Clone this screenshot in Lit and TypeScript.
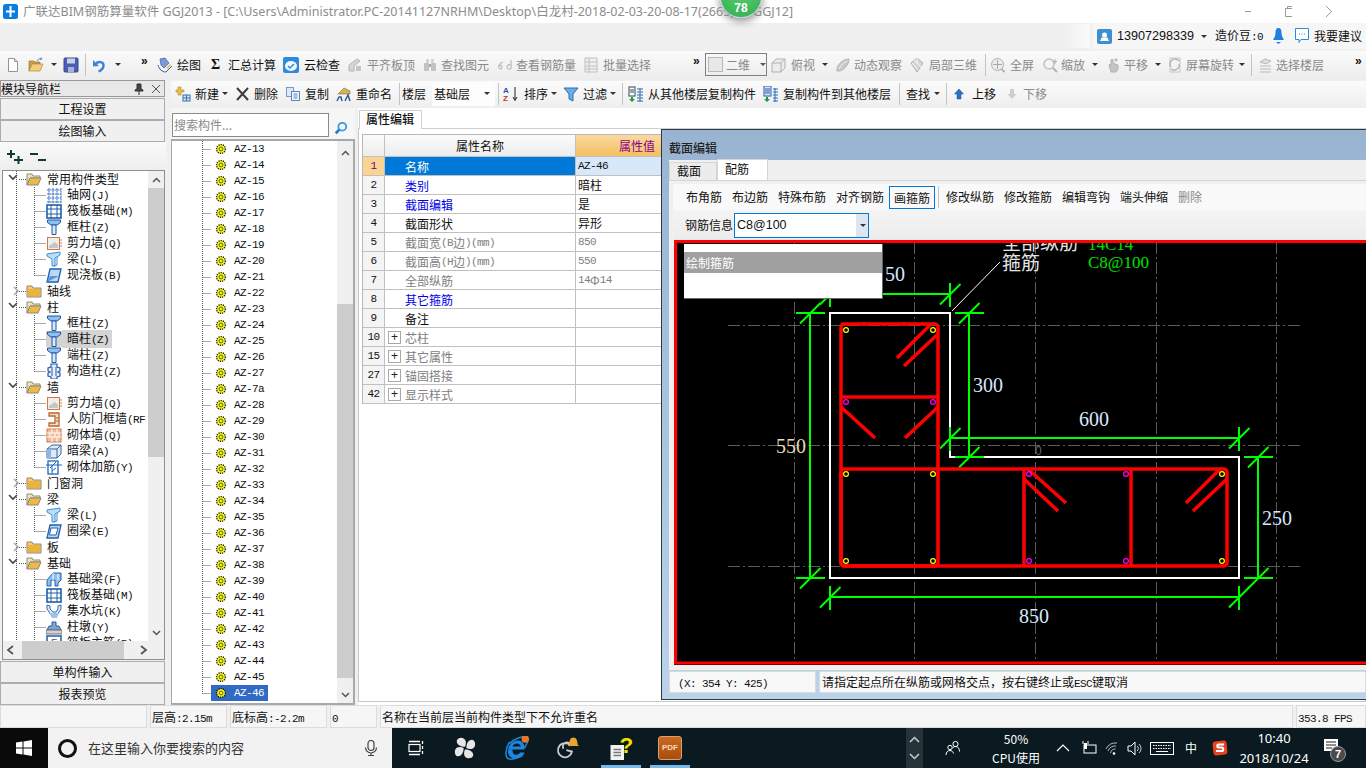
import { LitElement, html, svg, css, TemplateResult } from 'lit';
import { customElement } from 'lit/decorators.js';

// latin runs are narrower in the original bitmap font, so they get their own span
const m = (text: string) =>
  text.split(/([\x21-\x7e][\x20-\x7e]*)/).map((part, i) => (i % 2 ? html`<span class="m">${part}</span>` : part));

const ICONS: Record<string, TemplateResult> = {
  new: svg`<path d="M3.5 1.5h6l3 3v10h-9z" fill="#fff" stroke="#8b97a5"/><path d="M9.5 1.5v3h3" fill="#e3e8ee" stroke="#8b97a5"/>`,
  open: svg`<path d="M1 4h5l1 1h5v2H4l-3 7z" fill="#cfa048" stroke="#9a7a30" stroke-width=".7"/><path d="M4 7h11l-3 7H1z" fill="#f3cf7d" stroke="#a88a40" stroke-width=".7"/><path d="M9 4c1-2 3-3 5-2l-1-1.5M14 2l-2 .5" fill="none" stroke="#5f8cc5"/>`,
  save: svg`<rect x="1" y="1" width="14" height="14" rx="1" fill="#4c5fb4" stroke="#3a468c"/><rect x="4" y="1.5" width="8" height="5" fill="#c9d0ea"/><rect x="5" y="10" width="6" height="5" fill="#aab2cc"/>`,
  undo: svg`<path d="M2 3v6.5L8 9z" fill="#3a86d4"/><path d="M4 7.500C7 3.500 13 4.500 12.500 9 12.200 11.500 10 13.500 7.500 14.500" stroke="#3a86d4" stroke-width="2.4" fill="none"/>`,
  draw: svg`<path d="M3 2l5-1 4 5-5 5-3-3z" fill="#7d9ad8" stroke="#3c5da4" stroke-width=".7"/><path d="M1 8c1 4 4 7 8 7l6-6" fill="none" stroke="#3c5da4"/><path d="M9 11l4-4 1 1-3 4z" fill="#e8c050"/>`,
  cloud: svg`<rect x="0" y="0" width="16" height="16" rx="2" fill="#2b8bdc"/><ellipse cx="8" cy="9" rx="6" ry="5" fill="#f4f9fe"/><path d="M5 9l2 2 4-4" stroke="#2b8bdc" stroke-width="1.5" fill="none"/>`,
  align: svg`<path d="M2 14V8l8-6 3 2-6 5v5z" fill="#d5d5d5" stroke="#b5b5b5"/><rect x="9" y="9" width="5" height="5" fill="#c5c5c5"/>`,
  binoc: svg`<rect x="2" y="6" width="5" height="8" rx="1" fill="#c2c2c2"/><rect x="9" y="6" width="5" height="8" rx="1" fill="#c2c2c2"/><rect x="4" y="2" width="3" height="4" fill="#d5d5d5"/><rect x="9" y="2" width="3" height="4" fill="#d5d5d5"/><rect x="7" y="7" width="2" height="3" fill="#aaa"/>`,
  rebar: svg`<path d="M6 5C3 6 1 9 2 11c1 1.5 3 1 3-1s-2-2-3-1M14 3v9M14 8c-2-1-4 0-4 2s3 3 4 1" fill="none" stroke="#bbb" stroke-width="1.2"/>`,
  batch: svg`<path d="M2 1h12v14H2zM2 5h12M2 9h12M2 12h12M6 1v14" fill="#efefef" stroke="#c0c0c0"/>`,
  cube: svg`<path d="M2 6l4-4h9v9l-4 4H2z" fill="#ececec" stroke="#b0b0b0"/><path d="M2 6h9v9M11 6l4-4" fill="none" stroke="#b0b0b0"/>`,
  orbit: svg`<path d="M2 14C1 9 7 2 14 2c0 6-6 13-12 12z" fill="#c8c8c8" stroke="#b5b5b5"/><path d="M4 12C6 8 9 5 12 4" stroke="#eee" fill="none"/>`,
  local3d: svg`<path d="M8 1l6 5-6 9-6-9z" fill="#d5d5d5" stroke="#b0b0b0"/><path d="M5 3l7 7M3 6l6 7M8 1v6" stroke="#f5f5f5" fill="none"/>`,
  full: svg`<circle cx="7.5" cy="7.5" r="6" fill="#ececec" stroke="#b0b0b0"/><path d="M7.5 3v9M3 7.5h9" stroke="#a8a8a8"/><path d="M11.5 12l3 3" stroke="#b0b0b0" stroke-width="2"/>`,
  zoom: svg`<circle cx="7" cy="7" r="5" fill="#f4f4f4" stroke="#c0c0c0" stroke-width="1.5"/><path d="M11 11l4 4" stroke="#b0b0b0" stroke-width="2"/><path d="M13 2v5M11 4.5h4" stroke="#b0b0b0"/>`,
  pan: svg`<path d="M4 8l1-1 1 1V3l1-1 1 1v3l2 1 3 1v4l-2 3H6z" fill="#c5c5c5" stroke="#b0b0b0"/><path d="M11 1v4M9 3h4" stroke="#b0b0b0"/>`,
  rotate: svg`<rect x="3" y="1" width="10" height="14" fill="#f2f2f2" stroke="#c5c5c5"/><path d="M12 4a5 5 0 0 0-8 6M4 12a5 5 0 0 0 8-5" fill="none" stroke="#aaa" stroke-width="1.2"/>`,
  floors: svg`<path d="M3 5l5-3 6 2-5 3zM3 9h11M3 12h11M3 15h11" fill="#ddd" stroke="#b8b8b8"/>`,
  newitem: svg`<path d="M3 1h3v3h3v2H6v3H3V6H1V4h2z" fill="#f0c040" stroke="#a88a30" stroke-width=".6"/><rect x="8" y="9" width="7" height="6" fill="#dbe7f5" stroke="#3b6fb5"/><path d="M8 12h7M11.5 9v6" stroke="#3b6fb5"/>`,
  del: svg`<path d="M3 2l11 12M14 2L3 14" stroke="#3c3c3c" stroke-width="2"/>`,
  copy: svg`<rect x="1.5" y="1.5" width="7" height="9" fill="#dfe9f7" stroke="#7a97c0"/><rect x="6.5" y="5.5" width="8" height="9" fill="#f4f8fd" stroke="#5b84bb"/><path d="M8.5 8h4M8.5 10h4M8.5 12h4" stroke="#5b84bb"/>`,
  rename: svg`<path d="M2 8l6-6 6 3v3H5z" fill="#d5b45c" stroke="#7f6a2c" stroke-width=".6"/><path d="M1 15l2-4h2l1 4M9 15l3-6 2 6" fill="none" stroke="#335d99" stroke-width="1.5"/>`,
  sort: svg`<text x="0" y="7" font-size="8" font-weight="700" font-family="Liberation Sans" fill="#2c55a5">A</text><text x="0" y="15" font-size="8" font-weight="700" font-family="Liberation Sans" fill="#b53a2a">Z</text><path d="M12 1v13M10 11l2 3.5 2-3.5" stroke="#222" fill="none"/>`,
  filter: svg`<path d="M1 2h14L10 8v7l-4-2V8z" fill="#69aee4" stroke="#2b6eaf"/>`,
  fromfl: svg`<rect x="1" y="1" width="6" height="9" fill="#fff" stroke="#345"/><path d="M2 4h4M2 6h4" stroke="#345"/><path d="M3 11h2v2h2l-3 3-3-3h2z" fill="#1e9a3c"/><path d="M9 3h6M9 6h6M9 9h6M9 12h6M9 15h6M12 2v14" stroke="#2f6fb5"/>`,
  tofl: svg`<rect x="1" y="0" width="7" height="10" fill="#dbe8fb" stroke="#2c55a5"/><path d="M2 3h5M2 5h5M2 7h5" stroke="#2c55a5"/><path d="M3 11h2v2h2l-3 3-3-3h2z" fill="#1e9a3c"/><path d="M10 3h5M10 6h5M10 9h5M10 12h5M10 15h5M12 2v14" stroke="#2f6fb5"/>`,
  up: svg`<path d="M8 3l4.5 5H10v5H6V8H3.5z" fill="#2a70c8" stroke="#1b4f96" stroke-width=".5"/>`,
  down: svg`<path d="M8 13l4.5-5H10V3H6v5H3.5z" fill="#cdcdcd"/>`,
  search: svg`<circle cx="9.5" cy="6.5" r="4.5" fill="none" stroke="#3a97dd" stroke-width="2"/><path d="M6 10l-4 4" stroke="#1f7fce" stroke-width="3"/>`,
  folder: svg`<path d="M1 3h5l1 2h8v9H1z" fill="#f2cc6b" stroke="#8f8a7a"/><rect x="2" y="6" width="12" height="7" fill="#e9b33e"/>`,
  folderOpen: svg`<path d="M1 3h5l1 2h7v2H4l-3 7z" fill="#efe3bb" stroke="#8f8a7a"/><path d="M4 7h11l-3 7H1z" fill="#eeb84a" stroke="#8f8a7a"/>`,
  grid: svg`<path d="M1 3h14M1 7h14M1 11h14M1 15h14M3 1v15M7 1v15M11 1v15M15 1v15" stroke="#3b6fc5" stroke-dasharray="2 .6"/>`,
  raft: svg`<rect x="1" y="2" width="14" height="13" fill="#fff" stroke="#1f5fa8" stroke-width="1.6"/><path d="M1 6h14M1 11h14M5 2v13M11 2v13" stroke="#1f5fa8"/>`,
  col: svg`<path d="M1.5 1h13v2.5L11 6H5L1.5 3.5z" fill="#8fc0ee" stroke="#1e55a5"/><path d="M6 6h4v9.5H6z" fill="#d7e9fb" stroke="#1e55a5"/>`,
  wall: svg`<rect x="1.5" y="2.5" width="12" height="12" fill="#f0eeea" stroke="#d0784a"/><path d="M3 13h9v-3l-3-3-2 1-4 3z" fill="#c5c5c5"/><path d="M14 5h2M14 8h2M14 11h2" stroke="#d0784a"/>`,
  beam: svg`<path d="M1 3l13-2v3l-5 3v8H6V8L1 5z" fill="#bddcf6" stroke="#3c8fd6"/><path d="M11 6v8l-3 1" fill="none" stroke="#3c8fd6"/>`,
  slab: svg`<path d="M4 2h11l-3 13H1z" fill="#bcd8f5" stroke="#1f5fb0" stroke-width="1.3"/><path d="M1 15l3-6h9" fill="#5d94d8"/>`,
  cons: svg`<path d="M5 1h6v3l3 1v3l-2 1 2 1v3l-3 1v2H5v-2l-3-1v-3l2-1-2-1V5l3-1z" fill="#e8eef8" stroke="#245ca8" stroke-width="1.2"/><path d="M6 4v9M10 4v9" stroke="#245ca8"/>`,
  rf: svg`<path d="M3 2h10v13H3V12h6V5H3z" fill="#f2ddca" stroke="#b9652a" stroke-width="1.3"/><path d="M10 7h3M10 10h3" stroke="#b9652a"/>`,
  brick: svg`<rect x="1" y="2" width="14" height="13" fill="#f3bd9a" stroke="#cc7c4c"/><path d="M1 6h14M1 10h14M6 2v4M11 2v4M4 6v4M9 6v4M13 6v4M6 10v5M11 10v5" stroke="#fff"/>`,
  hbeam: svg`<path d="M1 6l5-4h9v9l-4 4H1z" fill="#dfeaf6" stroke="#34659f"/><path d="M1 6h10v9M11 6l4-4" fill="none" stroke="#34659f"/><rect x="1" y="6" width="4" height="9" fill="#8fb6df"/>`,
  jj: svg`<rect x="2" y="2" width="10" height="13" fill="#fff" stroke="#1f68c0" stroke-width="1.3"/><path d="M0 6h16M4 9l6-6M6 15V6M10 9l-4 3" stroke="#1f68c0"/>`,
  ring: svg`<path d="M4 2h11l-3 13H1z" fill="#bcd8f5" stroke="#1f5fb0" stroke-width="1.3"/><path d="M5 5h7l-2 7H3.5z" fill="#fff" stroke="#1f5fb0"/>`,
  fbeam: svg`<path d="M1 15V9l6-7h8v7l-3 3v3H9V9H5v6z" fill="#8fbdee" stroke="#235fae"/><path d="M7 9V2M12 9V3" stroke="#fff"/>`,
  pit: svg`<path d="M1 2l3 1v3l3 3h3l2-3V3l3-1v4l-4 6H5L1 6z" fill="#dfeaf6" stroke="#2f6cb8"/><path d="M3 10h10l-2 5H6z" fill="#9ac4ec"/>`,
  pier: svg`<path d="M6 7V3h4v4h3l2 4H1l2-4z" fill="#7da6d6" stroke="#345e94"/><rect x="0" y="11" width="16" height="4" fill="#d0d0d0" stroke="#777"/>`,
  rebars: svg`<rect x="1" y="1" width="14" height="14" fill="#fff" stroke="#1f5fa8" stroke-width="1.5"/><text x="5" y="12" font-size="10" font-family="Liberation Sans" fill="#1f5fa8">F</text>`,
  az: svg`<circle cx="8" cy="8" r="5" fill="#ffff00" stroke="#111" stroke-width="1.5" stroke-dasharray="1.4 1.1"/><circle cx="8" cy="8" r="2.2" fill="none" stroke="#444"/>`,
};

const ic = (name: string, size = 16) =>
  html`<svg class="ic" width=${size} height=${size} viewBox="0 0 16 16">${ICONS[name]}</svg>`;

const caret = html`<span class="caret"></span>`;

interface Cell {
  x: number;
  i?: string;
  t?: string;
  gray?: boolean;
  dd?: boolean;
  sep?: boolean;
  more?: boolean;
  c?: TemplateResult;
}

// toolbars are given as start positions, each cell is as wide as the gap to the next one
const strip = (cells: Cell[], start: number, end: number) =>
  html`<div class="strip" style="padding-left:${cells[0].x - start}px">
    ${cells.map((c, n) => {
      const w = (n + 1 < cells.length ? cells[n + 1].x : end) - c.x;
      return html`<div class="cell ${c.gray ? 'gray' : ''}" style="width:${w}px">
        ${c.i ? ic(c.i) : ''}${c.t ? m(c.t) : ''}${c.dd ? caret : ''}${c.sep ? html`<span class="sep"></span>` : ''}${c.more
          ? html`<span class="more">»</span>`
          : ''}${c.c ?? ''}
      </div>`;
    })}
  </div>`;

const TOOLS_1: Cell[] = [
  { x: 5, i: 'new' }, { x: 28, i: 'open' }, { x: 50, dd: true }, { x: 63, i: 'save' }, { x: 85, sep: true },
  { x: 91, i: 'undo' }, { x: 114, dd: true }, { x: 138, more: true }, { x: 157, i: 'draw' }, { x: 177, t: '绘图' },
  { x: 210, c: html`<b class="sigma">Σ</b>` }, { x: 228, t: '汇总计算' }, { x: 283, i: 'cloud' }, { x: 304, t: '云检查' },
  { x: 347, i: 'align', gray: true }, { x: 367, t: '平齐板顶', gray: true }, { x: 422, i: 'binoc' },
  { x: 441, t: '查找图元', gray: true }, { x: 497, i: 'rebar' }, { x: 516, t: '查看钢筋量', gray: true },
  { x: 583, i: 'batch' }, { x: 603, t: '批量选择', gray: true }, { x: 690, more: true },
  { x: 705, c: html`<div class="combo2d"><span class="sq"></span><span>二维</span>${caret}</div>` },
  { x: 770, i: 'cube' }, { x: 791, t: '俯视', gray: true }, { x: 821, dd: true }, { x: 835, i: 'orbit' },
  { x: 854, t: '动态观察', gray: true }, { x: 909, i: 'local3d' }, { x: 929, t: '局部三维', gray: true },
  { x: 985, sep: true }, { x: 990, i: 'full' }, { x: 1010, t: '全屏', gray: true }, { x: 1042, i: 'zoom' },
  { x: 1061, t: '缩放', gray: true }, { x: 1091, dd: true }, { x: 1105, i: 'pan' }, { x: 1124, t: '平移', gray: true },
  { x: 1154, dd: true }, { x: 1167, i: 'rotate' }, { x: 1186, t: '屏幕旋转', gray: true }, { x: 1238, dd: true },
  { x: 1251, sep: true }, { x: 1257, i: 'floors' }, { x: 1276, t: '选择楼层', gray: true }, { x: 1352, more: true },
];

const TOOLS_2: Cell[] = [
  { x: 175, i: 'newitem' }, { x: 195, t: '新建' }, { x: 221, dd: true }, { x: 234, i: 'del' }, { x: 254, t: '删除' },
  { x: 285, i: 'copy' }, { x: 305, t: '复制' }, { x: 336, i: 'rename' }, { x: 356, t: '重命名' }, { x: 399, sep: true },
  { x: 402, t: '楼层' }, { x: 432, c: html`<div class="floor"><span>基础层</span>${caret}</div>` }, { x: 498, sep: true },
  { x: 503, i: 'sort' }, { x: 524, t: '排序' }, { x: 550, dd: true }, { x: 563, i: 'filter' }, { x: 583, t: '过滤' },
  { x: 609, dd: true }, { x: 622, sep: true }, { x: 628, i: 'fromfl' }, { x: 648, t: '从其他楼层复制构件' },
  { x: 763, i: 'tofl' }, { x: 783, t: '复制构件到其他楼层' }, { x: 899, sep: true }, { x: 906, t: '查找' },
  { x: 933, dd: true }, { x: 946, sep: true }, { x: 951, i: 'up' }, { x: 972, t: '上移' }, { x: 1004, i: 'down' },
  { x: 1023, t: '下移', gray: true },
];

const REBAR_TOOLS: Cell[] = [
  { x: 686, t: '布角筋' }, { x: 732, t: '布边筋' }, { x: 778, t: '特殊布筋' }, { x: 836, t: '对齐钢筋' },
  { x: 889, c: html`<div class="pressed">画箍筋</div>` }, { x: 938, sep: true }, { x: 946, t: '修改纵筋' },
  { x: 1004, t: '修改箍筋' }, { x: 1062, t: '编辑弯钩' }, { x: 1120, t: '端头伸缩' }, { x: 1178, t: '删除', gray: true },
];

type Node = [level: 0 | 1, icon: string, label: string, last?: boolean, collapsed?: boolean];
const NAV: Node[] = [
  [0, 'folderOpen', '常用构件类型'], [1, 'grid', '轴网(J)'], [1, 'raft', '筏板基础(M)'], [1, 'col', '框柱(Z)'],
  [1, 'wall', '剪力墙(Q)'], [1, 'beam', '梁(L)'], [1, 'slab', '现浇板(B)', true], [0, 'folder', '轴线', false, true],
  [0, 'folderOpen', '柱'], [1, 'col', '框柱(Z)'], [1, 'col', '暗柱(Z)'], [1, 'col', '端柱(Z)'],
  [1, 'cons', '构造柱(Z)', true], [0, 'folderOpen', '墙'], [1, 'wall', '剪力墙(Q)'], [1, 'rf', '人防门框墙(RF'],
  [1, 'brick', '砌体墙(Q)'], [1, 'hbeam', '暗梁(A)'], [1, 'jj', '砌体加筋(Y)', true], [0, 'folder', '门窗洞', false, true],
  [0, 'folderOpen', '梁'], [1, 'beam', '梁(L)'], [1, 'ring', '圈梁(E)', true], [0, 'folder', '板', false, true],
  [0, 'folderOpen', '基础'], [1, 'fbeam', '基础梁(F)'], [1, 'raft', '筏板基础(M)'], [1, 'pit', '集水坑(K)'],
  [1, 'pier', '柱墩(Y)'], [1, 'rebars', '筏板主筋(R)'],
];

const PARTS = [...Array(15).keys()].map((n) => `AZ-${n + 13}`);
PARTS.push('AZ-7a');
for (let n = 28; n <= 46; n++) PARTS.push(`AZ-${n}`);

type PropKind = 'sel' | 'blue' | 'black' | 'gray' | 'group';
const PROPS: [string, string, string, PropKind][] = [
  ['1', '名称', 'AZ-46', 'sel'], ['2', '类别', '暗柱', 'blue'], ['3', '截面编辑', '是', 'blue'],
  ['4', '截面形状', '异形', 'black'], ['5', '截面宽(B边)(mm)', '850', 'gray'], ['6', '截面高(H边)(mm)', '550', 'gray'],
  ['7', '全部纵筋', '14Φ14', 'gray'], ['8', '其它箍筋', '', 'blue'], ['9', '备注', '', 'black'],
  ['10', '芯柱', '', 'group'], ['15', '其它属性', '', 'group'], ['27', '锚固搭接', '', 'group'], ['42', '显示样式', '', 'group'],
];

// dimension marks: [x, y] is where the dim line ends, horizontal means the tick crosses a horizontal run
const tick = (x: number, y: number, vertical: boolean) => svg`
  <path d="M${x - 10} ${y + 10.5}L${x + 10.5} ${y - 10}" />
  ${vertical
    ? svg`<path d="M${x} ${y - 11}V${y + 13}" />`
    : svg`<path d="M${x - 14} ${y}H${x + 15}" />`}`;

const SECTION = svg`
  <g stroke="#5a5a5a" stroke-dasharray="12 3 2 3" fill="none">
    ${[794, 914, 1035, 1156, 1276].map((x) => svg`<path d="M${x + 0.5} 243V663" />`)}
    ${[326, 446, 567].map((y) => svg`<path d="M728 ${y + 0.5}H1302" />`)}
  </g>
  <path d="M830 314H950V458H1239V579H830Z" fill="none" stroke="#fff" stroke-width="2" />
  <path d="M952 312L1000 263" stroke="#fff" />
  <g stroke="#00ff00" stroke-width="2" fill="none">
    <path d="M830 295H950M810 314V579M969 314V458M950 439H1239M1258 458V579M830 598H1239" />
    ${tick(950, 295, true)} ${tick(830, 295, true)}
    ${tick(810, 314, false)} ${tick(810, 579, false)}
    ${tick(969, 314, false)} ${tick(969, 458, false)}
    ${tick(950, 439, true)} ${tick(1239, 439, true)}
    ${tick(1258, 458, false)} ${tick(1258, 579, false)}
    ${tick(830, 598, true)} ${tick(1239, 598, true)}
  </g>
  <g stroke="#ff0000" stroke-width="3.5" fill="none" stroke-linejoin="round">
    <rect x="841" y="325" width="97" height="242" rx="3" />
    <rect x="841" y="470" width="386" height="97" rx="3" />
    <path d="M841 398H938M1024 470V567M1131 470V567" />
    <path d="M930 326L897 359M938 335L904 367M841 408L875 439M938 408L905 439M1028 470L1066 504M1024 480L1058 512M1220 470L1186 504M1227 480L1193 512" />
  </g>
  <g fill="none" stroke-width="1.2">
    ${[[846, 331], [933, 331], [846, 475], [933, 475], [846, 562], [933, 562], [1222, 475], [1222, 562]].map(
      ([x, y]) => svg`<circle cx=${x} cy=${y} r="2.4" stroke="#ffff00" />`
    )}
    ${[[846, 403], [933, 403], [1029, 475], [1126, 475], [1029, 562], [1126, 562]].map(
      ([x, y]) => svg`<circle cx=${x} cy=${y} r="2.4" stroke="#ff00ff" />`
    )}
  </g>
  <g font-family="Liberation Serif, serif" font-size="20" fill="#d8e8ff">
    <text x="885" y="282">50</text>
    <text x="973" y="393">300</text>
    <text x="1079" y="427">600</text>
    <text x="776" y="454" fill="#e8dcb8">550</text>
    <text x="1262" y="526">250</text>
    <text x="1019" y="624">850</text>
  </g>
  <text x="1035" y="456" font-family="Liberation Sans" font-size="12" fill="#666">0</text>
  <g font-family="Noto Sans CJK SC, sans-serif" font-size="19" fill="#e4e4e4">
    <text x="1002" y="251">全部纵筋</text>
    <text x="1002" y="271">箍筋</text>
  </g>
  <g font-family="Liberation Serif, serif" font-size="17" fill="#00e000">
    <text x="1088" y="251">14C14</text>
    <text x="1088" y="269">C8@100</text>
  </g>
  <rect x="675.5" y="242.5" width="700" height="421.5" fill="none" stroke="#ff0000" stroke-width="3" />`;

const TASK_ICONS = {
  win: svg`<path d="M0 2.5L6.5 1.6V7.5H0zM7.5 1.4L16 0V7.5H7.5zM0 8.5H6.5V14.4L0 13.5zM7.5 8.5H16V16L7.5 14.6z" fill="#fff" />`,
  mic: svg`<rect x="5" y="0.5" width="6" height="10" rx="3" fill="none" stroke="#444" stroke-width="1.2"/><path d="M2.5 7.5a5.5 5.5 0 0 0 11 0M8 13v3M5 15.5h6" fill="none" stroke="#444" stroke-width="1.2"/>`,
  view: svg`<rect x="1" y="4.5" width="11" height="7" fill="none" stroke="#fff" stroke-width="1.2"/><path d="M1 1.5h11M1 14.5h11M14.5 1v3M14.5 6v3M14.5 11v3" stroke="#fff" stroke-width="1.3"/>`,
  fan: svg`<path d="M8 7C4 7 2 5 2 3s3-3 5-2 2 4 1 6zM9 8c0-4 2-6 4-6s3 3 2 5-4 2-6 1zM8 9c4 0 6 2 6 4s-3 3-5 2-2-4-1-6zM7 8c0 4-2 6-4 6s-3-3-2-5 4-2 6-1z" fill="#e6e6e6" />`,
  ie: svg`<path d="M2 9h11c.5-4-2-6-4.5-6S3 5 2 9zm3-2c.5-1.500 2-2 3-2s2.300.5 2.500 2z" fill="#1c87de" fill-rule="evenodd"/><path d="M2 9c-.5 4 2 6 5 6s5-1 6-4h-3c-.5 1-1.500 1.500-3 1.500S5 11 5 9z" fill="#1c87de"/><path d="M3 5C6 2 11 0 14 1s0 5-1 7M3 4C0 9 0 14 2 15s5 0 7-1" fill="none" stroke="#1c87de"/><circle cx="13.5" cy="2" r="2.5" fill="#e8772e"/>`,
  spin: svg`<path d="M11 7a5 5 0 1 0 1 4l-4-1M11 6a2.500 2.500 0 1 0-5 3" fill="none" stroke="#ccc" stroke-width="1.3"/><path d="M10 6c0-3 1-5 3-5s3 2 3 5l1 1H9z" fill="#e9a32f"/>`,
  help: svg`<rect x="1" y="6" width="9" height="10" fill="#f2f2f2"/><path d="M3 9h5M3 11h5M3 13h5" stroke="#777"/><text x="7" y="11" font-size="15" font-weight="700" font-family="Liberation Sans" fill="#f5e000">?</text>`,
  people: svg`<circle cx="10.5" cy="4" r="2.6" fill="none" stroke="#fff"/><circle cx="5" cy="7.5" r="2.2" fill="none" stroke="#fff"/><path d="M1 15c0-3 2-4.500 4-4.500 1.500 0 3 1 3.500 3M7.500 8c1-1 2-1.500 3-1.500 2.500 0 4 2 4 5" fill="none" stroke="#fff"/>`,
  batt: svg`<rect x="3" y="5" width="12" height="8" fill="none" stroke="#fff"/><rect x="3" y="3" width="3" height="6" fill="#fff"/><path d="M2 1v3M7 1v3" stroke="#fff"/>`,
  wifi: svg`<path d="M1 9a11 11 0 0 1 11-6M3 11a8 8 0 0 1 8-5M5.500 13a5 5 0 0 1 5-4" fill="none" stroke="#bbb"/><circle cx="9" cy="13.5" r="1.3" fill="#fff"/>`,
  vol: svg`<path d="M1 6h3l4-4v13l-4-4H1z" fill="none" stroke="#fff"/><path d="M10 6a3 3 0 0 1 0 5M12 4a6 6 0 0 1 0 9" fill="none" stroke="#ccc"/>`,
  keys: svg`<rect x="0.5" y="2.5" width="23" height="12" fill="none" stroke="#fff"/><path d="M3 5.500h18M3 8.500h18" stroke="#fff" stroke-dasharray="1.5 1"/><path d="M6 11.500h12" stroke="#fff"/>`,
  sogou: svg`<rect x="1" y="1" width="14" height="14" rx="3" fill="#e8431f" transform="rotate(-6 8 8)"/><path d="M12 4.500H6.500C5 4.500 5 7.500 6.500 7.500H10c1.500 0 1.500 3.500 0 3.500H4" fill="none" stroke="#fff" stroke-width="2.2"/>`,
  note: svg`<path d="M1 1h14v12H1z" fill="#fff"/><path d="M3 4h10M3 7h10M3 10h6" stroke="#222"/>`,
};

const ti = (name: keyof typeof TASK_ICONS, w = 16, h = 16) =>
  html`<svg class="ic" width=${w} height=${h} viewBox="0 0 ${w} ${h}">${TASK_ICONS[name]}</svg>`;

@customElement('app-root')
export class AppRoot extends LitElement {
  static styles = css`
    :host {
      display: block;
      width: 1366px;
      height: 768px;
      overflow: hidden;
    }
    .app {
      position: relative;
      width: 1366px;
      height: 768px;
      overflow: hidden;
      display: flex;
      flex-direction: column;
      background: #f0f0f0;
      color: #111;
      font: 12px/16px 'Noto Sans CJK SC', sans-serif;
    }
    .m {
      font: 11px/16px 'Liberation Mono', monospace;
      letter-spacing: -0.6px;
    }
    .ic {
      flex: none;
      display: block;
    }

    /* title */
    .title {
      height: 23px;
      flex: none;
      background: #fff;
      display: flex;
      align-items: center;
      padding-left: 3px;
      color: #8c8c8c;
      font: 12.5px/16px 'Noto Sans', 'Noto Sans CJK SC', sans-serif;
      white-space: nowrap;
    }
    .logo {
      width: 15px;
      height: 15px;
      margin-right: 5px;
    }
    .title-tail {
      margin-left: 15px;
    }
    .controls {
      margin-left: auto;
      display: flex;
      width: 121px;
    }
    .controls svg {
      margin-right: 34px;
    }
    .badge {
      position: absolute;
      left: 720px;
      top: -24px;
      width: 42px;
      height: 42px;
      border-radius: 50%;
      background: radial-gradient(circle at 50% 30%, #5fce74, #2fae50);
      border: 1px solid #bcd;
      box-shadow: 0 3px 8px #8a8a8a;
      box-sizing: border-box;
      color: #fff;
      font: 700 12px/16px 'Liberation Sans', sans-serif;
      text-align: center;
      padding-top: 23px;
    }

    /* user band */
    .band {
      height: 28px;
      flex: none;
      display: flex;
      justify-content: flex-end;
      background: #f0f0f0;
    }
    .band-spacer {
      width: 25px;
      margin: 1px 2px 3px 0;
      background: linear-gradient(90deg, #f0f0f0, #fafafa);
    }
    .user {
      width: 274px;
      margin-bottom: 2px;
      background: #f6f6f6;
      display: flex;
      align-items: center;
    }
    .user > * {
      flex: none;
    }
    .phone {
      font: 12.6px/16px 'Liberation Sans', sans-serif;
      margin: 0 6px 0 5px;
    }

    /* toolbars */
    .strip {
      display: flex;
      align-items: center;
      height: 100%;
      white-space: nowrap;
    }
    .cell {
      flex: none;
      display: flex;
      align-items: center;
    }
    .gray {
      color: #8a8a8a;
    }
    .caret {
      display: block;
      width: 0;
      height: 0;
      border: 3px solid transparent;
      border-top: 3px solid #333;
      border-bottom: 0;
      margin-left: 1px;
    }
    .sep {
      display: block;
      width: 1px;
      height: 22px;
      background: #c4c4c4;
    }
    .more {
      font: 700 12px/12px 'Liberation Sans', sans-serif;
      margin: -8px 0 0 3px;
    }
    .sigma {
      font: 700 14px/16px 'Liberation Serif', serif;
      margin-left: 1px;
    }
    .tools1 {
      height: 29px;
      box-sizing: border-box;
      padding-bottom: 2px;
      flex: none;
      background: linear-gradient(#fafafa, #ececec);
    }
    .combo2d {
      width: 62px;
      height: 23px;
      box-sizing: border-box;
      border: 1px solid #808080;
      display: flex;
      align-items: center;
      color: #8a8a8a;
      padding-left: 2px;
    }
    .sq {
      width: 15px;
      height: 13px;
      margin-right: 3px;
      background: #e8e8e8;
      border: 1px solid #b8b8b8;
    }
    .combo2d .caret {
      margin-left: 10px;
      border-top-color: #555;
    }
    .floor {
      width: 61px;
      height: 24px;
      background: #fdfdfd;
      display: flex;
      align-items: center;
      padding-left: 2px;
    }
    .floor .caret {
      margin-left: 14px;
    }

    /* main area */
    .main {
      flex: 1;
      display: flex;
      min-height: 0;
    }
    .nav {
      width: 166px;
      flex: none;
      display: flex;
      flex-direction: column;
      box-sizing: border-box;
    }
    .nav-head {
      height: 15px;
      border: 1px solid #999;
      margin: 0 1px 1px 0;
      display: flex;
      align-items: center;
      background: #e8e8e8;
    }
    .nav-head .pin {
      margin-left: auto;
      margin-right: 7px;
    }
    .nav-head .x {
      margin-right: 3px;
    }
    .nav-btn {
      height: 20px;
      flex: none;
      border: 1px solid #adadad;
      background: #f0f0f0;
      text-align: center;
      line-height: 20px;
      margin-right: 1px;
    }
    .tool-mini {
      height: 28px;
      flex: none;
      display: flex;
      align-items: center;
      gap: 6px;
      padding-left: 7px;
      background: linear-gradient(#fafafa, #eeeeee);
    }
    .tree {
      flex: 1;
      min-height: 0;
      margin: 0 1px 1px 2px;
      border: 1px solid #8f8f8f;
      background: #fff;
      display: grid;
      grid-template: 1fr 18px / 1fr 16px;
    }
    .rows {
      overflow: hidden;
      min-height: 0;
    }
    .row {
      height: 16px;
      display: flex;
      align-items: center;
      white-space: nowrap;
    }
    .row .label {
      padding: 0 1px;
      margin-left: 4px;
    }
    .row.on .label {
      background: #d4d4d4;
      margin-left: 0;
      padding: 0 3px 0 5px;
    }
    .row.on .icbox {
      background: #d4d4d4;
    }
    .sb {
      background: #f0f0f0;
      display: flex;
      flex-direction: column;
      align-items: stretch;
    }
    .arrow {
      height: 17px;
      flex: none;
      display: flex;
      align-items: center;
      justify-content: center;
    }
    .track {
      flex: 1;
      display: flex;
      flex-direction: column;
    }
    .thumb {
      background: #cdcdcd;
    }
    .hsb {
      grid-column: 1 / 3;
      background: #f0f0f0;
      display: flex;
      align-items: center;
      justify-content: space-between;
      padding: 0 0 0 2px;
    }
    .hthumb {
      width: 102px;
      height: 100%;
      background: #cdcdcd;
      margin-left: 3px;
      margin-right: auto;
    }

    .right {
      flex: 1;
      min-width: 0;
      display: flex;
      flex-direction: column;
      padding: 1px 0 0 5px;
    }
    .tools2 {
      height: 27px;
      box-sizing: border-box;
      padding-bottom: 2px;
      flex: none;
      background: linear-gradient(#fbfbfb, #eeeeee);
      border-radius: 3px 0 0 0;
    }
    .work {
      flex: 1;
      display: flex;
      min-height: 0;
    }
    .parts {
      width: 184px;
      flex: none;
      display: flex;
      flex-direction: column;
      background: #f6f6f6;
    }
    .searchrow {
      height: 31px;
      flex: none;
      display: flex;
      align-items: flex-end;
      padding: 0 0 2px 1px;
      box-sizing: border-box;
    }
    .searchbox {
      width: 154px;
      height: 22px;
      border: 1px solid #8a8a8a;
      background: #fff;
      color: #8a8a8a;
      padding-left: 1px;
      line-height: 22px;
      margin-right: 5px;
    }
    .searchrow .ic {
      margin-bottom: 2px;
    }
    .partlist {
      flex: 1;
      min-height: 0;
      border: 1px solid #a8a8a8;
      border-width: 2px 2px 2px 1px;
      display: grid;
      grid-template-columns: 1fr 16px;
      background: #fff;
    }
    .pitems {
      overflow: hidden;
    }
    .pitem {
      height: 16px;
      display: flex;
      align-items: center;
      font: 11px/16px 'Liberation Mono', monospace;
      letter-spacing: -0.6px;
    }
    .pitem .hi {
      flex: none;
      display: flex;
      align-items: center;
      width: 57px;
      padding-left: 3px;
      box-sizing: border-box;
    }
    .pitem span {
      padding-left: 6px;
    }
    .pitem.on .hi {
      background: #316ac5;
      color: #fff;
    }

    .props {
      flex: 1;
      min-width: 0;
      display: flex;
      flex-direction: column;
      margin-left: 3px;
      background: #fff;
    }
    .tabline {
      height: 21px;
      flex: none;
      border-bottom: 1px solid #d0d0d0;
      box-sizing: border-box;
      display: flex;
      padding-top: 2px;
    }
    .proptab {
      width: 63px;
      height: 19px;
      margin-left: 1px;
      background: #fff;
      border: 1px solid #d0d0d0;
      border-bottom: 0;
      box-sizing: border-box;
      padding-left: 6px;
      font-weight: 500;
    }
    .frame {
      flex: 1;
      border: 1px solid #c8c8c8;
      border-top: 0;
      margin-bottom: 3px;
      padding: 5px 0 0 3px;
    }
    .grid {
      width: 299px;
      display: grid;
      grid-template-columns: 22px 191px 86px;
      grid-template-rows: 22px;
      grid-auto-rows: 19px;
      border-top: 1px solid #b8b8b8;
      border-left: 1px solid #b8b8b8;
    }
    .grid > div {
      border-right: 1px solid #c0c0c0;
      border-bottom: 1px solid #c0c0c0;
      box-sizing: border-box;
      white-space: nowrap;
      line-height: 18px;
    }
    .gh {
      background: linear-gradient(#fbfbfb, #ececec);
      text-align: center;
      line-height: 22px !important;
    }
    .gh.hot {
      background: linear-gradient(#fbd99f, #f3c062);
      color: #8b008b;
      text-align: right;
      padding-right: 6px;
    }
    .num {
      text-align: center;
      font: 11px/18px 'Liberation Mono', monospace;
      letter-spacing: -0.6px;
      background: #f4f4f4;
    }
    .num.on {
      background: #fbd393;
      color: #7a007a;
    }
    .name {
      padding: 1px 0 0 20px;
      display: flex;
      align-items: center;
    }
    .name.sel {
      background: #0078d7;
      color: #fff;
    }
    .name.blue {
      color: #0000e6;
    }
    .name.gray,
    .name.group,
    .val.gray {
      color: #808080;
    }
    .name.group {
      padding-left: 3px;
    }
    .plus {
      width: 11px;
      height: 11px;
      border: 1px solid #a8a8a8;
      margin-right: 4px;
      display: flex;
      align-items: center;
      justify-content: center;
      color: #222;
      font: 12px/11px 'Liberation Sans', sans-serif;
    }
    .val {
      padding-left: 2px;
      display: flex;
      align-items: center;
    }
    .val.sel {
      background: #d8e8f8;
    }

    /* section dialog */
    .dialog {
      position: absolute;
      left: 661px;
      top: 129px;
      width: 705px;
      height: 571px;
      box-sizing: border-box;
      border: solid #2d3a44;
      border-width: 1px 0 1px 1px;
      background: linear-gradient(#99b4d1, #bad2ea);
      display: flex;
      flex-direction: column;
    }
    .dlg-title {
      height: 30px;
      flex: none;
      padding: 10px 0 0 7px;
      box-sizing: border-box;
      color: #222;
      font-weight: 500;
    }
    .dlg-body {
      margin-left: 7px;
      flex: none;
      height: 510px;
      background: #f0f0f0;
      display: flex;
      flex-direction: column;
    }
    .tabs {
      height: 21px;
      flex: none;
      display: flex;
      align-items: flex-end;
      border-bottom: 1px solid #d5d5d5;
      box-sizing: border-box;
    }
    .tab {
      width: 48px;
      height: 18px;
      padding-left: 7px;
      box-sizing: border-box;
      background: #ececec;
      border: 1px solid #d5d5d5;
      border-bottom: 0;
    }
    .tab.on {
      width: 51px;
      height: 21px;
      background: #fff;
      padding-top: 1px;
    }
    .bar {
      height: 26px;
      flex: none;
      margin: 3px 0 0 4px;
      background: #f9f9f9;
      border-radius: 3px 0 0 3px;
    }
    .pressed {
      width: 46px;
      height: 23px;
      box-sizing: border-box;
      border: 1px solid #0078d7;
      text-align: center;
      line-height: 21px;
    }
    .infobar {
      height: 30px;
      flex: none;
      margin-left: 4px;
      display: flex;
      align-items: center;
      padding-left: 12px;
      background: linear-gradient(#f4f4f4, #ececec);
    }
    .combo {
      width: 135px;
      height: 25px;
      margin-left: 1px;
      border: 1px solid #0078d7;
      box-sizing: border-box;
      background: #fff;
      display: flex;
      align-items: center;
      justify-content: space-between;
      padding-left: 2px;
      font: 12.5px/16px 'Liberation Sans', sans-serif;
    }
    .combo i {
      width: 12px;
      height: 23px;
      background: #dde6f0;
      display: flex;
      align-items: center;
      justify-content: center;
    }
    .canvas {
      position: relative;
      height: 425px;
      flex: none;
      margin-left: 5px;
      overflow: hidden;
      background: #000;
    }
    .canvas svg {
      display: block;
    }
    .popup {
      position: absolute;
      left: 10px;
      top: 4px;
      width: 199px;
      height: 55px;
      background: #fff;
      border: solid #666;
      border-width: 0 1px 1px 0;
      padding-top: 8px;
      box-sizing: border-box;
    }
    .popup div {
      height: 21px;
      background: #a0a0a0;
      color: #fff;
      line-height: 21px;
      padding-left: 2px;
    }
    .dlg-status {
      height: 22px;
      flex: none;
      margin-top: 6px;
      display: flex;
      gap: 3px;
    }
    .dlg-status div {
      background: #f8f8f8;
      border: 1px solid #dadada;
      box-sizing: border-box;
      line-height: 20px;
      white-space: nowrap;
    }

    /* status bar */
    .status {
      height: 23px;
      flex: none;
      display: flex;
      gap: 3px;
      background: #f0f0f0;
    }
    .status div {
      flex: none;
      background: #f6f6f6;
      border: 1px solid #dcdcdc;
      box-sizing: border-box;
      line-height: 21px;
      padding-left: 1px;
      white-space: nowrap;
    }

    /* taskbar */
    .taskbar {
      height: 40px;
      flex: none;
      display: flex;
      align-items: stretch;
      background: #0a1a20;
      color: #fff;
      white-space: nowrap;
    }
    .start {
      width: 48px;
      background: #0a0a0a;
      display: flex;
      align-items: center;
      justify-content: center;
    }
    .tsearch {
      width: 344px;
      background: #f2f2f2;
      color: #333;
      display: flex;
      align-items: center;
      padding-left: 10px;
      box-sizing: border-box;
      font-size: 13px;
    }
    .ring {
      width: 13px;
      height: 13px;
      border: 3px solid #111;
      border-radius: 50%;
      margin-right: 11px;
    }
    .tsearch .mic {
      margin-left: auto;
      margin-right: 13px;
    }
    .tray {
      flex: 1;
      display: flex;
      align-items: center;
      position: relative;
    }
    .slot {
      flex: none;
      display: flex;
      justify-content: center;
      align-items: center;
      align-self: stretch;
      box-sizing: border-box;
    }
    .slot.run {
      border-bottom: 3px solid #76b9ed;
      padding-top: 3px;
    }
    .pdf {
      width: 24px;
      height: 24px;
      border-radius: 3px;
      background: linear-gradient(#c96a1e, #a94c10);
      border: 1px solid #d9a070;
      box-sizing: border-box;
      font: 700 8px/22px 'Liberation Sans', sans-serif;
      text-align: center;
      color: #f6d9bc;
    }
    .scroller {
      background: #26343a;
      flex-direction: column;
      justify-content: space-between;
      padding: 8px 0 8px;
    }
    .cpu {
      text-align: center;
      line-height: 19px;
    }
    .clock {
      text-align: center;
      font: 13px/20px 'Noto Sans', sans-serif;
    }
    .notify {
      position: relative;
      margin-top: -4px;
    }
    .seven {
      position: absolute;
      left: 7px;
      top: 8px;
      width: 16px;
      height: 16px;
      border-radius: 50%;
      background: #4a4a4a;
      border: 1px solid #999;
      box-sizing: border-box;
      text-align: center;
      font: 700 11px/14px 'Liberation Sans', sans-serif;
    }
  `;

  private navRow(n: Node, i: number) {
    const [level, icon, label, last, collapsed] = n;
    const w = level ? 43 : 23;
    const chevron = collapsed
      ? svg`<path d="M9 9l4 4-4 4" stroke="#aaa" stroke-width="1.6" fill="none" transform="translate(2 -5)"/>`
      : svg`<path d="M7 5l4 4 4-4" stroke="#444" stroke-width="1.6" fill="none" transform="translate(-1 -1)"/>`;
    return html`<div class="row ${i === 10 ? 'on' : ''}">
      <svg class="ic" width=${w} height="16">
        <g stroke="#555" stroke-dasharray="1 1" fill="none">
          <path d="M13.5 0V16" />
          ${level
            ? svg`<path d="M31.5 0V${last ? 8.5 : 16}M31.5 8.5H43" />`
            : svg`<path d="M16 8.5H23" />`}
        </g>
        ${level ? '' : chevron}
      </svg>
      <span class="icbox">${ic(icon)}</span>
      <span class="label">${m(label)}</span>
    </div>`;
  }

  private renderNav() {
    return html`<div class="nav">
      <div class="nav-head">
        模块导航栏
        <svg class="pin" width="10" height="12"><path d="M3 1h4v5l2 1v1H1V7l2-1zM5 8v4" fill="#444" stroke="#333" /></svg>
        <svg class="x" width="10" height="10"><path d="M1 1l8 8M9 1l-8 8" stroke="#555" /></svg>
      </div>
      <div class="nav-btn">工程设置</div>
      <div class="nav-btn">绘图输入</div>
      <div class="tool-mini">
        <svg class="ic" width="16" height="16"><path d="M0 6h8M4 2v8M7 12h9M11.5 8v8" stroke="#0d3d2d" stroke-width="2" /></svg>
        <svg class="ic" width="17" height="16"><path d="M1 6h8M9 12h8" stroke="#0d3d2d" stroke-width="2" /></svg>
      </div>
      <div class="tree">
        <div class="rows">${NAV.map((n, i) => this.navRow(n, i))}</div>
        <div class="sb">
          <div class="arrow"><svg width="9" height="6"><path d="M1 5l3.5-3.5L8 5" stroke="#555" stroke-width="1.5" fill="none" /></svg></div>
          <div class="track"><div class="thumb" style="height:269px"></div></div>
          <div class="arrow"><svg width="9" height="6"><path d="M1 1l3.5 3.5L8 1" stroke="#555" stroke-width="1.5" fill="none" /></svg></div>
        </div>
        <div class="hsb">
          <svg width="14" height="10"><path d="M8 1L3 5l5 4" stroke="#555" stroke-width="1.8" fill="none" /></svg>
          <div class="hthumb"></div>
          <svg width="14" height="10" style="margin-right:14px"><path d="M5 1l5 4-5 4" stroke="#555" stroke-width="1.8" fill="none" /></svg>
        </div>
      </div>
      <div class="nav-btn">单构件输入</div>
      <div class="nav-btn">报表预览</div>
    </div>`;
  }

  private renderParts() {
    return html`<div class="parts">
      <div class="searchrow">
        <div class="searchbox">搜索构件...</div>
        ${ic('search', 14)}
      </div>
      <div class="partlist">
        <div class="pitems">
          ${PARTS.map(
            (p) => html`<div class="pitem ${p === 'AZ-46' ? 'on' : ''}">
              <svg class="ic" width="39" height="16">
                <path d="M30.5 0V${p === 'AZ-46' ? 8.5 : 16}M30.5 8.5H39" stroke="#555" stroke-dasharray="1 1" />
              </svg>
              <div class="hi">${ic('az', 14)}<span>${p}</span></div>
            </div>`
          )}
        </div>
        <div class="sb">
          <div class="arrow" style="margin-top:3px">
            <svg width="9" height="6"><path d="M1 5l3.5-3.5L8 5" stroke="#555" stroke-width="1.5" fill="none" /></svg>
          </div>
          <div class="track">
            <div style="height:143px"></div>
            <div class="thumb" style="height:374px"></div>
          </div>
          <div class="arrow">
            <svg width="9" height="6"><path d="M1 1l3.5 3.5L8 1" stroke="#555" stroke-width="1.5" fill="none" /></svg>
          </div>
        </div>
      </div>
    </div>`;
  }

  private renderProps() {
    return html`<div class="props">
      <div class="tabline"><div class="proptab">属性编辑</div></div>
      <div class="frame">
        <div class="grid">
          <div class="gh"></div>
          <div class="gh">属性名称</div>
          <div class="gh hot">属性值</div>
          ${PROPS.map(([n, name, val, kind]) => html`
            <div class="num ${kind === 'sel' ? 'on' : ''}">${n}</div>
            <div class="name ${kind}">
              ${kind === 'group' ? html`<span class="plus">+</span>` : ''}${m(name)}
            </div>
            <div class="val ${kind === 'sel' ? 'sel' : ''} ${kind === 'gray' ? 'gray' : ''}">${m(val)}</div>
          `)}
        </div>
      </div>
    </div>`;
  }

  private renderDialog() {
    return html`<div class="dialog">
      <div class="dlg-title">截面编辑</div>
      <div class="dlg-body">
        <div class="tabs"><div class="tab">截面</div><div class="tab on">配筋</div></div>
        <div class="bar">${strip(REBAR_TOOLS, 673, 1366)}</div>
        <div class="infobar">
          钢筋信息
          <div class="combo">C8@100<i>${caret}</i></div>
        </div>
        <div class="canvas">
          <svg width="692" height="425" viewBox="674 241 692 425">${SECTION}</svg>
          <div class="popup"><div>绘制箍筋</div></div>
        </div>
        <div class="dlg-status">
          <div style="width:147px;padding-left:8px">${m('(X: 354 Y: 425)')}</div>
          <div style="flex:1;padding-left:2px">${m('请指定起点所在纵筋或网格交点，按右键终止或ESC键取消')}</div>
        </div>
      </div>
    </div>`;
  }

  private renderTaskbar() {
    const slot = (w: number, body: unknown, cls = '') =>
      html`<div class="slot ${cls}" style="width:${w}px">${body}</div>`;
    const scaled = (name: keyof typeof TASK_ICONS, size: number, box = 16) =>
      html`<svg width=${size} height=${size} viewBox="0 0 ${box} ${box}">${TASK_ICONS[name]}</svg>`;
    return html`<div class="taskbar">
      <div class="start">${ti('win')}</div>
      <div class="tsearch">
        <span class="ring"></span>在这里输入你要搜索的内容
        <span class="mic">${ti('mic')}</span>
      </div>
      <div class="tray">
        ${slot(48, ti('view'))}
        ${slot(50, scaled('fan', 22))}
        ${slot(53, scaled('ie', 24))}
        ${slot(48, scaled('spin', 24, 17))}
        ${slot(10, '')}
        ${slot(40, scaled('help', 24), 'run')}
        ${slot(9, '')}
        ${slot(40, html`<div class="pdf">PDF</div>`, 'run')}
        <div style="width:216px"></div>
        ${slot(17, html`<svg width="11" height="7"><path d="M1 6l4.5-4.5L10 6" stroke="#ccc" fill="none" stroke-width="1.5" /></svg>
          <svg width="11" height="7"><path d="M1 1l4.5 4.5L10 1" stroke="#ccc" fill="none" stroke-width="1.5" /></svg>`, 'scroller')}
        ${slot(60, ti('people'))}
        ${slot(66, html`<div class="cpu">50%<br />CPU使用</div>`)}
        ${slot(28, html`<svg width="14" height="8"><path d="M1 7l6-6 6 6" stroke="#fff" fill="none" stroke-width="1.2" /></svg>`)}
        ${slot(24, ti('batt'))}
        ${slot(24, ti('wifi'))}
        ${slot(20, ti('vol'))}
        ${slot(34, ti('keys', 24, 16))}
        ${slot(24, '中')}
        ${slot(34, ti('sogou'))}
        ${slot(74, html`<div class="clock">10:40<br />2018/10/24</div>`)}
        ${slot(40, html`<div class="notify">${ti('note')}<span class="seven">7</span></div>`)}
      </div>
    </div>`;
  }

  render() {
    return html`<div class="app">
      <div class="title">
        <svg class="logo" viewBox="0 0 15 15"><rect width="15" height="15" rx="2.5" fill="#0a7de0" /><path d="M7.5 2v11M3 7.5h9" stroke="#fff" stroke-width="2" /></svg>
        <span>广联达BIM钢筋算量软件 GGJ2013 - [C:\\Users\\Administrator.PC-20141127NRHM\\Desktop\\白龙村-2018-02-03-20-08-17(2665)</span>
        <span class="title-tail">-GGJ12]</span>
        <div class="controls">
          <svg width="11" height="11"><path d="M0 5.5H11" stroke="#999" /></svg>
          <svg width="11" height="11"><path d="M0.5 2.5H8.5V10.5H0.5ZM2.5 2.5V0.5H10.5V8.5H8.5" stroke="#999" fill="none" /></svg>
          <svg width="11" height="11"><path d="M0 0L11 11M11 0L0 11" stroke="#999" /></svg>
        </div>
      </div>
      <div class="badge">78</div>
      <div class="band">
        <div class="band-spacer"></div>
        <div class="user">
          <svg style="margin-left:5px" width="15" height="15"><rect width="15" height="15" rx="2" fill="#3f8fd0" /><circle cx="7.5" cy="6" r="2.5" fill="#fff" /><path d="M3 12h9l-1.5-3.5h-6z" fill="#fff" /></svg>
          <span class="phone">13907298339</span>
          ${caret}
          <span style="margin-left:8px">造价豆<span class="m">:0</span></span>
          <svg style="margin-left:9px" width="13" height="18"><path d="M6.5 1C4 1 3.5 3 3.5 6S2 11 1 13h11c-1-2-2.5-4-2.5-7S9 1 6.5 1z" fill="#1f7fe0" /><path d="M4 15h5l-2.5 2z" fill="#1f7fe0" /></svg>
          <svg style="margin-left:9px" width="16" height="18"><path d="M1.5 1.5h13v11H7l-2 3v-3H1.5z" fill="#fff" stroke="#2b8be0" /><path d="M5 7h1M7.5 7h1M10 7h1" stroke="#2b8be0" /></svg>
          <span style="margin-left:4px">我要建议</span>
        </div>
      </div>
      <div class="tools1">${strip(TOOLS_1, 0, 1366)}</div>
      <div class="main">
        ${this.renderNav()}
        <div class="right">
          <div class="tools2">${strip(TOOLS_2, 171, 1366)}</div>
          <div class="work">${this.renderParts()}${this.renderProps()}</div>
        </div>
      </div>
      <div class="status">
        <div style="width:147px"></div>
        <div style="width:77px">${m('层高:2.15m')}</div>
        <div style="width:97px">${m('底标高:-2.2m')}</div>
        <div style="width:47px">${m('0')}</div>
        <div style="width:913px">名称在当前层当前构件类型下不允许重名</div>
        <div style="flex:1">${m('353.8 FPS')}</div>
      </div>
      ${this.renderTaskbar()}
      ${this.renderDialog()}
    </div>`;
  }
}
